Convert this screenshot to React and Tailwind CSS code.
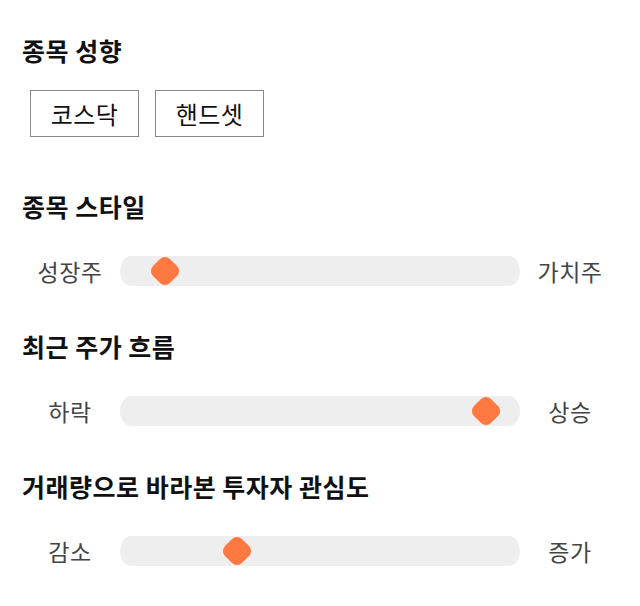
import React, { useState } from 'react';

const font = { fontFamily: '"Noto Sans CJK KR", "Noto Sans", sans-serif' };

const Heading = ({ children, className = '' }) => (
  <h2 className={`h-[32px] leading-[32px] text-[25px] tracking-[0.5px] font-bold text-[#111] ${className}`}>{children}</h2>
);

const Slider = ({ left, right, value }) => (
  <div className="flex items-center h-[30px]">
    <span className="w-[100px] text-center text-[23px] leading-[30px] tracking-[0.5px] text-[#444]">{left}</span>
    <div className="relative w-[400px] h-[30px] bg-[#eeeeee] rounded-[11px/15px]">
      <div
        className="absolute top-[3px] w-[24px] h-[24px] rotate-45 rounded-[7px] bg-[#ff7940]"
        style={{ left: value - 12 }}
      />
    </div>
    <span className="w-[100px] text-center text-[23px] leading-[30px] tracking-[0.5px] text-[#444]">{right}</span>
  </div>
);

const App = () => {
  const [type, setType] = useState(null);

  return (
    <div className="w-[640px] h-[606px] bg-white pl-[20px] pt-[34px]" style={font}>
      <Heading className="pl-[2px]">종목 성향</Heading>
      <div className="flex gap-[16px] pl-[10px] mt-[24px]">
        {['코스닥', '핸드셋'].map((t) => (
          <button
            key={t}
            onClick={() => setType(t)}
            className="w-[109px] h-[47px] border border-[#888] text-[24px] tracking-[0.5px] text-[#111] bg-white"
          >
            {t}
          </button>
        ))}
      </div>

      <Heading className="pl-[2px] mt-[53px]">종목 스타일</Heading>
      <div className="mt-[34px]">
        <Slider left="성장주" right="가치주" value={45} />
      </div>

      <Heading className="pl-[2px] mt-[44px]">최근 주가 흐름</Heading>
      <div className="mt-[34px]">
        <Slider left="하락" right="상승" value={366} />
      </div>

      <Heading className="pl-[2px] mt-[44px]">거래량으로 바라본 투자자 관심도</Heading>
      <div className="mt-[34px]">
        <Slider left="감소" right="증가" value={117} />
      </div>
    </div>
  );
};

export default App;
